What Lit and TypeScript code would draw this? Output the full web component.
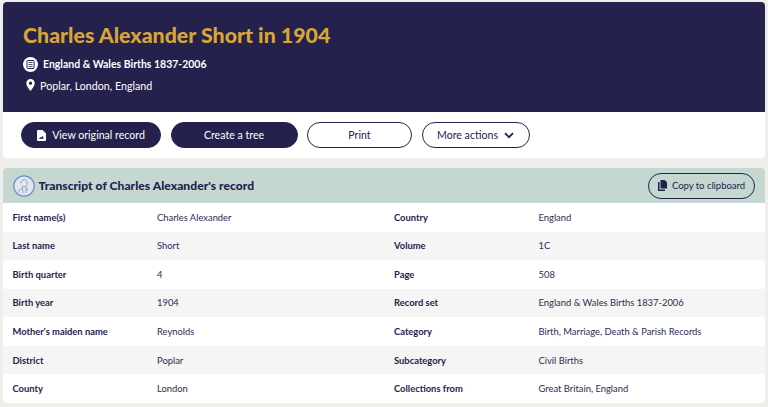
import { LitElement, html, css } from "lit";
import { customElement } from "lit/decorators.js";

const rows: [string, string, string, string][] = [
  ["First name(s)", "Charles Alexander", "Country", "England"],
  ["Last name", "Short", "Volume", "1C"],
  ["Birth quarter", "4", "Page", "508"],
  ["Birth year", "1904", "Record set", "England & Wales Births 1837-2006"],
  ["Mother's maiden name", "Reynolds", "Category", "Birth, Marriage, Death & Parish Records"],
  ["District", "Poplar", "Subcategory", "Civil Births"],
  ["County", "London", "Collections from", "Great Britain, England"],
];

@customElement("app-root")
export class AppRoot extends LitElement {
  static styles = css`
    :host {
      display: block;
      width: 768px;
      height: 407px;
      overflow: hidden;
      box-sizing: border-box;
      padding: 2px 3px 0 2.5px;
      background: #f0eeea;
      font-family: Lato, "Noto Sans", sans-serif;
      color: #24224d;
      -webkit-font-smoothing: antialiased;
    }
    .card { background: #fff; border-radius: 4px; overflow: hidden; }
    .hero {
      background: #24224d;
      height: 110px;
      box-sizing: border-box;
      padding: 19px 20.5px 0;
    }
    h1 {
      margin: 0;
      font-size: 21.3px;
      line-height: 28px;
      font-weight: 900;
      color: #d9a635;
      letter-spacing: 0.01px;
    }
    .line { display: flex; align-items: center; color: #fff; }
    .set { margin-top: 7px; height: 16px; font-size: 10.48px; font-weight: 700; gap: 5px; }
    .place { margin-top: 5px; height: 16px; font-size: 10.7px; gap: 5.5px; padding-left: 2.5px; }
    .actions { height: 46px; box-sizing: border-box; padding: 10px 18.5px; display: flex; gap: 9.5px; }
    .btn {
      height: 26px;
      box-sizing: border-box;
      border-radius: 13px;
      border: 1px solid #24224d;
      display: flex;
      align-items: center;
      justify-content: center;
      font-size: 10.6px;
      gap: 6px;
      white-space: nowrap;
    }
    .solid { background: #24224d; color: #fff; }
    .outline { background: #fff; color: #24224d; }
    .w1 { width: 140px; }
    .w2 { width: 127px; }
    .w3 { width: 105px; }
    .w4 { width: 108px; }
    .transcript { margin-top: 10px; }
    .thead {
      background: #c4d8d1;
      height: 35px;
      box-sizing: border-box;
      padding: 0 10px;
      display: flex;
      align-items: center;
      gap: 4px;
    }
    .thead h2 { margin: 0; font-size: 12.1px; font-weight: 900; flex: 1; letter-spacing: 0.025px; }
    .copy {
      width: 107.5px;
      height: 26px;
      background: transparent;
      font-size: 9.5px;
      gap: 3.5px;
      letter-spacing: -0.03px;
    }
    .row {
      display: grid;
      grid-template-columns: 144.5px 237px 144.5px 1fr;
      height: 28.57px;
      align-items: center;
      font-size: 9.4px;
      padding-left: 10px;
    }
    .row:nth-child(odd) { background: #f5f5f5; }
    .row b { font-weight: 700; }
    .row span { color: #2e2c55; }
  `;

  render() {
    return html`
      <div class="card">
        <div class="hero">
          <h1>Charles Alexander Short in 1904</h1>
          <div class="line set">
            <svg width="15" height="15" viewBox="0 0 15 15">
              <circle cx="7.5" cy="7.5" r="7.5" fill="#fff" />
              <rect x="4" y="3.5" width="7" height="8" rx="0.6" fill="none" stroke="#24224d" />
              <path d="M5.5 5.5h4M5.5 7.5h4M5.5 9.5h4" stroke="#24224d" stroke-width="0.8" />
            </svg>
            <span>England &amp; Wales Births 1837-2006</span>
          </div>
          <div class="line place">
            <svg width="9" height="12" viewBox="0 0 9 12">
              <path fill="#fff" fill-rule="evenodd" d="M4.5 0A4.2 4.2 0 0 0 .3 4.2C.3 7 4.5 12 4.5 12s4.2-5 4.2-7.8A4.2 4.2 0 0 0 4.5 0Zm0 2.6a1.6 1.6 0 1 1 0 3.2 1.6 1.6 0 0 1 0-3.2Z" />
            </svg>
            <span>Poplar, London, England</span>
          </div>
        </div>
        <div class="actions">
          <div class="btn solid w1">
            <svg width="9" height="11" viewBox="0 0 9 11">
              <path fill="#fff" fill-rule="evenodd" d="M1 0h4.6L9 3.4V10a1 1 0 0 1-1 1H1a1 1 0 0 1-1-1V1a1 1 0 0 1 1-1Zm1 8.8h5L5.4 6 4 7.6 3.2 6.9Z" />
            </svg>
            <span>View original record</span>
          </div>
          <div class="btn solid w2">Create a tree</div>
          <div class="btn outline w3">Print</div>
          <div class="btn outline w4">
            <span>More actions</span>
            <svg width="10" height="7" viewBox="0 0 10 7">
              <path d="M1 1.2 5 5.2 9 1.2" fill="none" stroke="#24224d" stroke-width="1.8" />
            </svg>
          </div>
        </div>
      </div>
      <div class="card transcript">
        <div class="thead">
          <svg width="22" height="22" viewBox="0 0 22 22">
            <circle cx="11" cy="11" r="10.2" fill="#dfe7ea" stroke="#6f8fc9" stroke-width="1.2" />
            <path d="M8 8.5c0-2.5 1.4-3.8 3.2-3.8s3 1.4 3 3.4c0 2-1 3.5-2.6 3.5-.6 0-1-.2-1.4-.6M9.6 11v2.2L6 15.2v2.5M13 11.4v2l2.6 1.6M9.6 13.4 10 18M13 13.5V18" fill="none" stroke="#7f96b8" stroke-width="0.8" />
          </svg>
          <h2>Transcript of Charles Alexander's record</h2>
          <div class="btn copy">
            <svg width="11" height="11" viewBox="0 0 11 11">
              <path fill="#24224d" d="M3.5 0h4.2L10 2.3V8.5H3.5Z M1 2h1.5v7.5H8V11H1Z" />
            </svg>
            <span>Copy to clipboard</span>
          </div>
        </div>
        ${rows.map(
          (r) => html`<div class="row"><b>${r[0]}</b><span>${r[1]}</span><b>${r[2]}</b><span>${r[3]}</span></div>`
        )}
      </div>
    `;
  }
}
